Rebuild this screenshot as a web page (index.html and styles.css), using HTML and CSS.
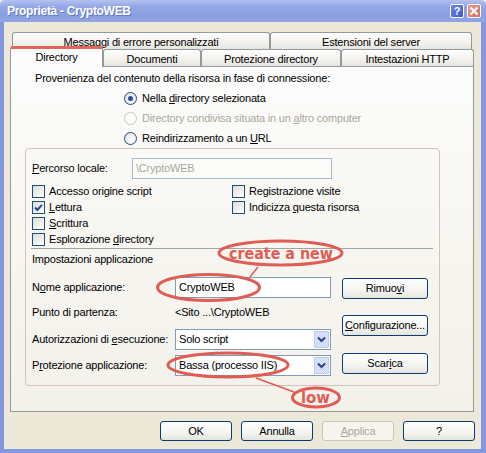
FILE: index.html
```html
<!DOCTYPE html>
<html>
<head>
<meta charset="utf-8">
<title>Proprietà - CryptoWEB</title>
<link rel="stylesheet" href="styles.css">
</head>
<body>
<div class="window">
  <div class="titlebar">
    <span class="title">Proprietà - CryptoWEB</span>
    <span class="tb-btn help">?</span>
    <span class="tb-btn close"><svg width="10" height="10" viewBox="0 0 10 10"><path d="M1.5 1.5 L8.5 8.5 M8.5 1.5 L1.5 8.5" stroke="#fff" stroke-width="2"/></svg></span>
  </div>
  <div class="frame">
    <div class="tabs">
      <div class="tabrow back">
        <div class="tab t-msg"><span>Messaggi di errore personalizzati</span></div>
        <div class="tab t-ext"><span>Estensioni del server</span></div>
      </div>
      <div class="tabrow front">
        <div class="tab sel t-dir"><span>Directory</span></div>
        <div class="tab t-doc"><span>Documenti</span></div>
        <div class="tab t-pro"><span>Protezione directory</span></div>
        <div class="tab t-http"><span>Intestazioni HTTP</span></div>
      </div>
    </div>
    <div class="panel">
      <div class="p-head">Provenienza del contenuto della risorsa in fase di connessione:</div>
      <div class="radios">
        <div class="radio-row"><span class="radio on"></span><span>Nella <u>d</u>irectory selezionata</span></div>
        <div class="radio-row dis"><span class="radio"></span><span>Directory condivisa situata in un <u>a</u>ltro computer</span></div>
        <div class="radio-row"><span class="radio"></span><span>Reindirizzamento a un <u>U</u>RL</span></div>
      </div>
      <div class="group">
        <div class="path-row">
          <span class="lbl-path"><u>P</u>ercorso locale:</span>
          <span class="input dis-input">\CryptoWEB</span>
        </div>
        <div class="checks">
          <div class="chk-row"><span class="chk"></span><span>Accesso origine script</span></div>
          <div class="chk-row"><span class="chk"></span><span>Registrazione visite</span></div>
          <div class="chk-row"><span class="chk on"><svg width="11" height="11" viewBox="0 0 11 11"><path d="M2 5.5 L4.3 8 L9 2.8" fill="none" stroke="#21469a" stroke-width="2"/></svg></span><span><u>L</u>ettura</span></div>
          <div class="chk-row"><span class="chk"></span><span>Indicizza <u>q</u>uesta risorsa</span></div>
          <div class="chk-row"><span class="chk"></span><span><u>S</u>crittura</span></div>
          <div class="chk-row empty"></div>
          <div class="chk-row"><span class="chk"></span><span>Esplorazione <u>d</u>irectory</span></div>
        </div>
        <div class="sep"></div>
        <div class="imp">Impostazioni applicazione</div>
        <div class="app">
          <div class="app-left">
            <div class="app-row r1"><span class="lbl">N<u>o</u>me applicazione:</span><span class="input">CryptoWEB</span></div>
            <div class="app-row r2"><span class="lbl">Punto di partenza:</span><span class="val">&lt;Sito ...\CryptoWEB</span></div>
            <div class="app-row r3"><span class="lbl">Autorizzazioni di <u>e</u>secuzione:</span><span class="select"><span class="sel-text">Solo script</span><span class="arrow"><svg width="9" height="7" viewBox="0 0 9 7"><path d="M1 1.5 L4.5 5 L8 1.5" fill="none" stroke="#2b3f94" stroke-width="2"/></svg></span></span></div>
            <div class="app-row r4"><span class="lbl">P<u>r</u>otezione applicazione:</span><span class="select"><span class="sel-text">Bassa (processo IIS)</span><span class="arrow"><svg width="9" height="7" viewBox="0 0 9 7"><path d="M1 1.5 L4.5 5 L8 1.5" fill="none" stroke="#2b3f94" stroke-width="2"/></svg></span></span></div>
          </div>
          <div class="app-right">
            <div class="btn b1"><span>Rimuo<u>v</u>i</span></div>
            <div class="btn b2"><span><u>C</u>onfigurazione...</span></div>
            <div class="btn b3"><span>Scar<u>i</u>ca</span></div>
          </div>
        </div>
      </div>
    </div>
    <div class="bottom">
      <div class="btn"><span>OK</span></div>
      <div class="btn"><span>Annulla</span></div>
      <div class="btn disabled"><span><u>A</u>pplica</span></div>
      <div class="btn"><span>?</span></div>
    </div>
  </div>
</div>
<svg class="annot" width="486" height="453" viewBox="0 0 486 453">
  <g fill="none" stroke="#e05c54" stroke-width="3">
    <ellipse cx="280.5" cy="253" rx="61.5" ry="12"/>
    <ellipse cx="208.5" cy="287.5" rx="51" ry="13"/>
    <path d="M258 267 L250 277" stroke-width="1.5"/>
    <ellipse cx="228" cy="365" rx="60" ry="12"/>
    <path d="M256 378 L294 392" stroke-width="1.5"/>
    <ellipse cx="316" cy="397.5" rx="23.5" ry="9.5"/>
  </g>
  <text x="229" y="259" class="ann-text" textLength="104" lengthAdjust="spacingAndGlyphs">create a new</text>
  <text x="301" y="403" class="ann-text" textLength="29" lengthAdjust="spacingAndGlyphs">low</text>
</svg>
</body>
</html>
```

FILE: styles.css
```css
* { box-sizing: border-box; }
html, body { margin: 0; padding: 0; }
body {
  width: 486px;
  height: 453px;
  overflow: hidden;
  position: relative;
  background: #ece9d8;
  font-family: "Liberation Sans", Arial, sans-serif;
  font-size: 11px;
  line-height: 13px;
  letter-spacing: -0.2px;
  color: #000;
}
u { text-decoration: underline; text-underline-offset: 1px; }

.window {
  width: 486px;
  height: 453px;
  display: flex;
  flex-direction: column;
}

.titlebar {
  height: 22px;
  flex: none;
  display: flex;
  align-items: center;
  padding: 0 5px 0 7px;
  gap: 3px;
  background: linear-gradient(#b3c2f0, #94a7e6 30%, #8a9fe2 70%, #93a5e2);
  border-radius: 5px 5px 0 0;
}
.title {
  flex: 1;
  color: #fff;
  font-weight: bold;
  font-size: 12px;
  letter-spacing: -0.3px;
  text-shadow: 1px 1px 0 #6278c4;
}
.tb-btn {
  width: 14px;
  height: 14px;
  border: 1px solid #fff;
  border-radius: 2px;
  display: flex;
  align-items: center;
  justify-content: center;
  color: #fff;
  font-weight: bold;
  font-size: 11px;
  letter-spacing: 0;
}
.tb-btn.help { background: linear-gradient(135deg, #6e86e6, #3e5bd0); }
.tb-btn.close { background: linear-gradient(135deg, #e79a90, #d0705c); }

.frame {
  flex: 1;
  display: flex;
  flex-direction: column;
  border-style: solid;
  border-color: #8297de;
  border-width: 0 5px 4px 4px;
  background: #ece9d8;
}

.tabs { padding-top: 10px; }
.tabrow { display: flex; height: 17px; }
.tabrow.back { margin-left: 8px; }
.tabrow.front { margin-left: 6px; }
.tab {
  height: 17px;
  padding-top: 2px;
  border: 1px solid #919b9c;
  border-bottom: none;
  border-radius: 3px 3px 0 0;
  background: linear-gradient(#fefefe, #f2f1ec 60%, #e6e5de);
  display: flex;
  align-items: center;
  justify-content: center;
  white-space: nowrap;
}
.t-msg { width: 258px; }
.t-ext { width: 202px; }
.t-dir { width: 93px; }
.t-doc { width: 98px; }
.t-pro { width: 140px; }
.t-http { width: 133px; }
.tab.sel {
  height: 21px;
  margin-top: -3px;
  padding-top: 0;
  padding-bottom: 2px;
  position: relative;
  z-index: 1;
  border-top: 3px solid #e4665a;
  background: #fcfcfc;
}

.panel {
  margin-left: 6px;
  width: 464px;
  height: 346px;
  border: 1px solid #919b9c;
  background: linear-gradient(#fcfcfc, #f7f6f1 50%, #f2f1ea);
}
.p-head { margin: 5px 0 0 24px; }
.radios { margin-top: 3px; padding-left: 113px; }
.radio-row { height: 20px; display: flex; align-items: center; white-space: nowrap; }
.radio {
  width: 13px;
  height: 13px;
  border-radius: 50%;
  border: 1px solid #1d4f84;
  background: radial-gradient(circle at 65% 65%, #fff, #dcdcd4);
  margin-right: 5px;
  display: flex;
  align-items: center;
  justify-content: center;
}
.radio.on::after {
  content: "";
  width: 5px;
  height: 5px;
  border-radius: 50%;
  background: #2d4c9a;
}
.radio-row.dis { color: #aca899; }
.radio-row.dis .radio { border-color: #cac8bb; background: #fbfbf8; }

.group {
  margin-left: 14px;
  width: 415px;
  height: 238px;
  border: 1px solid #d8c3ba;
  border-radius: 4px;
  padding: 9px 6px 0 6px;
}
.path-row { display: flex; align-items: center; height: 21px; }
.lbl-path { width: 100px; }
.input {
  height: 21px;
  border: 1px solid #7f9db9;
  background: #fff;
  display: flex;
  align-items: center;
  padding-left: 3px;
  white-space: nowrap;
}
.path-row .input { width: 200px; }
.dis-input { background: #fbfbf8; color: #aca899; border-color: #a5b9cf; }

.checks {
  margin-top: 6px;
  display: grid;
  grid-template-columns: 200px 180px;
  row-gap: 3px;
}
.chk-row { height: 13px; display: flex; align-items: center; white-space: nowrap; }
.chk {
  width: 13px;
  height: 13px;
  border: 1px solid #1d4f84;
  background: linear-gradient(135deg, #dcdcd4, #fff);
  margin-right: 4px;
  display: flex;
  align-items: center;
  justify-content: center;
}
.sep {
  margin: 2px 0 0 -1px;
  width: 402px;
  height: 1px;
  background: #a3a3a0;
}
.imp { margin-top: 4px; }

.app { display: flex; margin-top: 11px; }
.app-left { width: 299px; }
.app-row { display: flex; align-items: center; }
.app-row .lbl { width: 143px; white-space: nowrap; }
.app-row .input, .app-row .select { width: 156px; }
.r1 { height: 21px; }
.r2 { height: 16px; margin-top: 6px; }
.r3 { height: 21px; margin-top: 9px; }
.r4 { height: 21px; margin-top: 5px; }
.val { white-space: nowrap; }
.select {
  height: 21px;
  border: 1px solid #7f9db9;
  background: #fff;
  display: flex;
  align-items: center;
  padding: 1px;
}
.sel-text { flex: 1; padding-left: 2px; white-space: nowrap; }
.arrow {
  width: 15px;
  height: 17px;
  border: 1px solid #bccbf0;
  border-radius: 1px;
  background: repeating-conic-gradient(#c6d2f6 0 25%, #e4eafc 0 50%) 0 0 / 2px 2px;
  display: flex;
  align-items: center;
  justify-content: center;
}

.app-right { margin-left: 11px; width: 86px; }
.btn {
  height: 21px;
  border: 1px solid #0a3b74;
  border-radius: 3px;
  background: linear-gradient(#fefefe, #f4f4f0 60%, #e5e4dc);
  display: flex;
  align-items: center;
  justify-content: center;
  white-space: nowrap;
}
.app-right .b1 { margin-top: 1px; }
.app-right .b2 { margin-top: 16px; }
.app-right .b3 { margin-top: 17px; }

.bottom {
  margin-top: 9px;
  display: flex;
  justify-content: flex-end;
  gap: 9px;
  padding-right: 6px;
}
.bottom .btn { width: 72px; height: 20px; }
.btn.disabled { border-color: #c9c7ba; color: #aca899; background: #f5f4ee; }

.annot {
  position: absolute;
  left: 0;
  top: 0;
  pointer-events: none;
}
.ann-text {
  font-family: "DejaVu Sans", sans-serif;
  font-weight: bold;
  font-size: 15px;
  letter-spacing: 0;
  fill: #e05c54;
}
```
